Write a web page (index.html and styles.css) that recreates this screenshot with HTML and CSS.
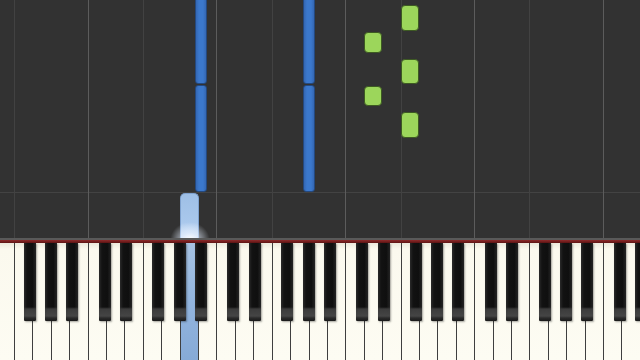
FILE: index.html
```html
<!DOCTYPE html>
<html lang="en">
<head>
<meta charset="utf-8">
<title>Piano roll</title>
<link rel="stylesheet" href="styles.css">
</head>
<body>
<div class="stage">
  <div class="roll">
    <div class="lanes">
      <div class="lane"></div><div class="lane f"></div><div class="lane"></div><div class="lane"></div><div class="lane"></div><div class="lane c"></div><div class="lane"></div>
      <div class="lane"></div><div class="lane f"></div><div class="lane"></div><div class="lane"></div><div class="lane"></div><div class="lane c"></div><div class="lane"></div>
      <div class="lane"></div><div class="lane f"></div><div class="lane"></div><div class="lane"></div><div class="lane"></div><div class="lane c"></div><div class="lane"></div>
      <div class="lane"></div><div class="lane f"></div><div class="lane"></div><div class="lane"></div><div class="lane"></div><div class="lane c"></div><div class="lane"></div>
      <div class="lane"></div><div class="lane f"></div><div class="lane"></div><div class="lane"></div><div class="lane"></div><div class="lane c"></div><div class="lane"></div>
      <div class="lane"></div>
    </div>
    <div class="note blue" style="left:195px;top:-10px;height:94px"></div>
    <div class="note blue" style="left:195px;top:85px;height:107px"></div>
    <div class="note blue" style="left:303px;top:-10px;height:94px"></div>
    <div class="note blue" style="left:303px;top:85px;height:107px"></div>
    <div class="note green" style="left:401px;top:5px;height:26px"></div>
    <div class="note green" style="left:364px;top:32px;height:21px"></div>
    <div class="note green" style="left:401px;top:59px;height:25px"></div>
    <div class="note green" style="left:364px;top:86px;height:20px"></div>
    <div class="note green" style="left:401px;top:112px;height:26px"></div>
    <div class="note lit" style="left:180px;top:193px;height:52px"></div>
    <div class="glow" style="left:170px;top:222px"></div>
  </div>
  <div class="rail"></div>
  <div class="redline"></div>
  <div class="keys">
    <div class="wk"></div>
    <div class="wk"><span class="bk fs"></span></div>
    <div class="wk"><span class="bk gs"></span></div>
    <div class="wk"><span class="bk as"></span></div>
    <div class="wk"></div>
    <div class="wk"><span class="bk cs"></span></div>
    <div class="wk"><span class="bk ds"></span></div>

    <div class="wk"></div>
    <div class="wk"><span class="bk fs"></span></div>
    <div class="wk"><span class="bk gs"></span></div>
    <div class="wk down"><span class="bk as"></span></div>
    <div class="wk"></div>
    <div class="wk"><span class="bk cs"></span></div>
    <div class="wk"><span class="bk ds"></span></div>

    <div class="wk"></div>
    <div class="wk"><span class="bk fs"></span></div>
    <div class="wk"><span class="bk gs"></span></div>
    <div class="wk"><span class="bk as"></span></div>
    <div class="wk"></div>
    <div class="wk"><span class="bk cs"></span></div>
    <div class="wk"><span class="bk ds"></span></div>

    <div class="wk"></div>
    <div class="wk"><span class="bk fs"></span></div>
    <div class="wk"><span class="bk gs"></span></div>
    <div class="wk"><span class="bk as"></span></div>
    <div class="wk"></div>
    <div class="wk"><span class="bk cs"></span></div>
    <div class="wk"><span class="bk ds"></span></div>

    <div class="wk"></div>
    <div class="wk"><span class="bk fs"></span></div>
    <div class="wk"><span class="bk gs"></span></div>
    <div class="wk"><span class="bk as"></span></div>
    <div class="wk"></div>
    <div class="wk"><span class="bk cs"></span></div>
    <div class="wk"><span class="bk ds"></span></div>

    <div class="wk"></div>
  </div>
</div>
</body>
</html>
```

FILE: styles.css
```css
* { box-sizing: border-box; }
html, body { margin: 0; padding: 0; background: #313131; }
.stage {
  width: 640px;
  height: 360px;
  overflow: hidden;
  display: flex;
  flex-direction: column;
  font-family: "Liberation Sans", sans-serif;
}
.roll {
  position: relative;
  height: 238px;
  flex: none;
  overflow: hidden;
  background:
    linear-gradient(to bottom, transparent 192px, #434343 192px, #434343 193px, transparent 193px),
    #323232;
}
.lanes {
  display: flex;
  height: 100%;
  margin-left: -4.42px;
}
.lane {
  flex: none;
  width: 18.42px;
  height: 100%;
}
.lane.f { border-left: 1px solid #424242; }
.lane.c { border-left: 1px solid #5c5c5c; }

.note {
  position: absolute;
  border-radius: 3px;
}
.note.blue {
  width: 12px;
  background: linear-gradient(to right, #3467b3, #3b78cc 30%, #3b78cc 70%, #3467b3);
  border: 1px solid #24497f;
}
.note.green {
  width: 18px;
  border-radius: 4px;
  background: #9cd65b;
  border: 1px solid #3d5a22;
}
.note.lit {
  width: 19px;
  border-radius: 5px 5px 0 0;
  background: linear-gradient(to bottom, #9ebfe6 0%, #a9c8ec 55%, #cfe0f5 85%, #eef5fd 100%);
  border: 1px solid #7fa2cf;
  border-bottom: none;
}
.glow {
  position: absolute;
  width: 40px;
  height: 26px;
  background: radial-gradient(ellipse at 50% 70%, rgba(255,255,255,0.95) 0%, rgba(230,240,255,0.6) 30%, rgba(200,220,250,0) 70%);
  pointer-events: none;
}

.rail {
  height: 2px;
  flex: none;
  background: #595959;
}
.redline {
  height: 3px;
  flex: none;
  background: linear-gradient(to bottom, #8d2a2a, #5e1414);
}
.keys {
  flex: 1;
  display: flex;
  margin-left: -4.42px;
}
.wk {
  position: relative;
  flex: none;
  width: 18.42px;
  height: 100%;
  background: linear-gradient(to bottom, #ece9dc 0px, #fbf9ee 6px, #fdfcf3 100%);
  border-left: 1px solid #3f3f3f;
}
.wk.down {
  background: linear-gradient(to bottom, #a7c3e3 0%, #93b5de 50%, #86aad6 100%);
}
.bk {
  position: absolute;
  top: 0;
  width: 12px;
  height: 78px;
  z-index: 2;
  border-radius: 0 0 1px 1px;
  background:
    linear-gradient(to bottom, transparent 64px, #3b3b3b 66px, #454545 73px, #2a2a2a 75px, #1a1a1a 78px),
    linear-gradient(to right, #2a2a2a, #121212 25%, #0f0f0f 70%, #242424);
  box-shadow: 1px 1px 2px rgba(0,0,0,0.35);
}
.bk.cs { right: -4.6px; }
.bk.ds { right: -7.5px; }
.bk.fs { right: -3.2px; }
.bk.gs { right: -6px; }
.bk.as { right: -8.6px; }
```
